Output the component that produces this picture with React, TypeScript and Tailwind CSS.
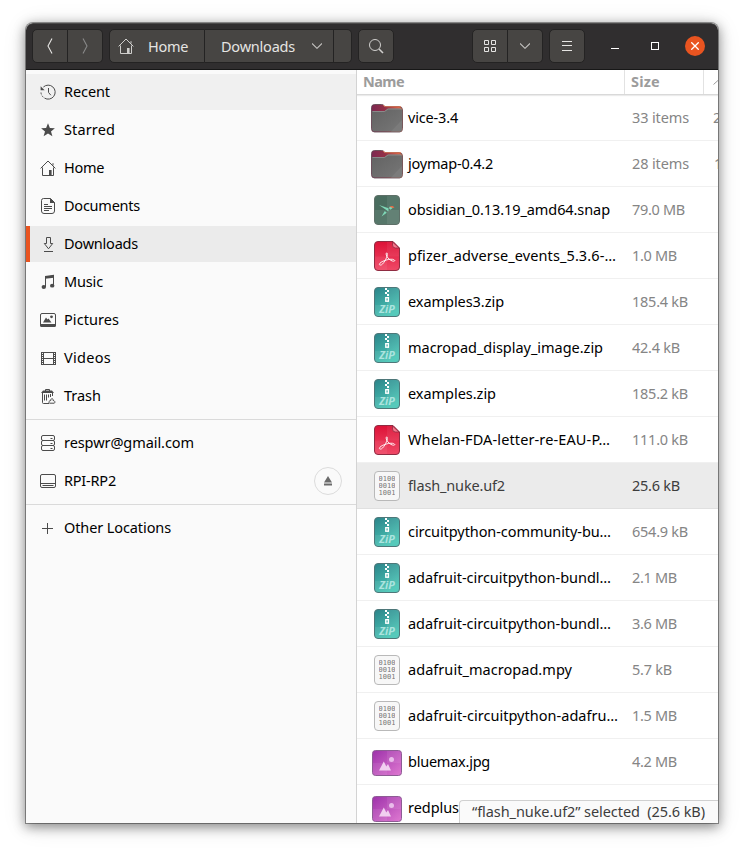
import { useLayoutEffect, useRef, useState, type ReactNode } from "react";

/** Single line of text whose tracking is adjusted so that it spans `width` pixels. */
function Label({ text, width, className = "" }: { text: string; width: number; className?: string }) {
  const ref = useRef<HTMLSpanElement>(null);
  const [tracking, setTracking] = useState(0);
  useLayoutEffect(() => {
    if (ref.current) {
      const natural = ref.current.getBoundingClientRect().width;
      setTracking((width - natural) / text.length);
    }
  }, [text, width]);
  return (
    <span ref={ref} className={`whitespace-pre leading-5 ${className}`} style={{ letterSpacing: tracking }}>
      {text}
    </span>
  );
}

function Glyph({ children, className = "" }: { children: ReactNode; className?: string }) {
  return (
    <svg width="16" height="16" viewBox="0 0 16 16" fill="none" stroke="currentColor" className={`shrink-0 ${className}`}>
      {children}
    </svg>
  );
}

const HomeGlyph = ({ className }: { className?: string }) => (
  <Glyph className={className}>
    <path d="M.6 8.4 8 1l7.4 7.4M2.5 7.5v8h11v-8M13 3.2v2.3" />
    <path d="M9 10h2.6v5.5H9z" fill="currentColor" stroke="none" />
  </Glyph>
);

const glyphs = {
  recent: (
    <Glyph>
      <path d="M3.400 3A7 7 0 1 1 4.500 14.100M8.500 4v4.400l2.300 2.800" />
      <path d="M.6 2.200v4h4z" fill="currentColor" stroke="none" />
      <path d="M1 8.500a7 7 0 0 0 3.500 5.600" strokeDasharray="2 1.400" />
    </Glyph>
  ),
  star: (
    <Glyph>
      <path d="m8 1.200 1.900 4.700 5 .3-3.900 3.200 1.400 4.900L8 11.600l-4.400 2.700L5 9.400 1.100 6.200l5-.3z" fill="currentColor" stroke="none" />
    </Glyph>
  ),
  home: <HomeGlyph />,
  documents: (
    <Glyph>
      <path d="M3.500.5H10.500l4 4V13a2.500 2.500 0 0 1-2.500 2.500H4A2.500 2.500 0 0 1 1.500 13V2.500a2 2 0 0 1 2-2zM4 6.500h4M4 8.500h8M4 10.500h8M4 12.500h5" />
      <path d="M10 0v5h5z" fill="currentColor" stroke="none" />
    </Glyph>
  ),
  downloads: (
    <Glyph>
      <path d="M6.500 1.500h4v6h2.200L8.500 12.800 4.300 7.500h2.200zM4 15.500h9" />
    </Glyph>
  ),
  music: (
    <Glyph>
      <path d="M5.500 13V3l8-1v9.500" />
      <path d="M5 1.900 14 .8v3L5 4.800z" fill="currentColor" stroke="none" />
      <ellipse cx="3.800" cy="13" rx="2.200" ry="1.900" fill="currentColor" stroke="none" />
      <ellipse cx="12.200" cy="11.700" rx="2.200" ry="1.900" fill="currentColor" stroke="none" />
    </Glyph>
  ),
  pictures: (
    <Glyph>
      <rect x=".5" y="1.500" width="15" height="12.500" rx="1.500" />
      <path d="M0 12h16v1.500a1.500 1.500 0 0 1-1.500 1.500h-13A1.500 1.500 0 0 1 0 13.500zM3 10.500 6 5.500l1.500 2L8.500 6.500l3 4z" fill="currentColor" stroke="none" />
      <circle cx="11.500" cy="4.800" r="1.400" fill="currentColor" stroke="none" />
    </Glyph>
  ),
  videos: (
    <Glyph>
      <path d="M3.500 2v13M13.500 2v13M1 2.500h15M1 14.500h15M3 8.500h11M1.500 2v13M15.500 2v13" />
      <path d="M2.500 4v10M14.500 4v10" strokeDasharray="1 1" />
    </Glyph>
  ),
  trash: (
    <Glyph>
      <path d="M5.500 3V1.500h4V3M2.500 5v9.500q0 1 1 1H9M4.500 6.500v6M6.500 6.500v6M8.500 6.500v3M10.500 6v3" />
      <path d="M1 5 3 2.500h9L14 5zM12 5h1v3h-1z" fill="currentColor" stroke="none" />
      <path d="M9.500 15.200c-1.400-1-.2-2.700 1.300-2.700-.4-1.300.7-2 1.700-1.700.9.500.6 1.200.6 1.700 1.300-.2 2.600 1.700 1.200 2.700z" />
    </Glyph>
  ),
  server: (
    <Glyph>
      <rect x="1.500" y=".5" width="13" height="5" rx="1.500" />
      <rect x="1.500" y="5.500" width="13" height="5" rx="1.500" />
      <rect x="1.500" y="10.500" width="13" height="5" rx="1.500" />
      <path d="M10.500 3.500h2M10.500 8.500h2M10.500 13.500h2" />
    </Glyph>
  ),
  drive: (
    <Glyph>
      <rect x=".5" y="1.500" width="15" height="13" rx="1.500" />
      <path d="M1 10.500h14M2.500 12.500h11" />
    </Glyph>
  ),
  plus: (
    <Glyph>
      <path d="M7.500 3v11M2 8.500h11" />
    </Glyph>
  ),
};

type Place = { icon: keyof typeof glyphs; text: string; width: number; tone?: string; eject?: boolean };

const places: Place[][] = [
  [
    { icon: "recent", text: "Recent", width: 46, tone: "bg-[#f0f0f0]" },
    { icon: "star", text: "Starred", width: 51 },
    { icon: "home", text: "Home", width: 40 },
    { icon: "documents", text: "Documents", width: 76 },
    { icon: "downloads", text: "Downloads", width: 74, tone: "bg-[#ebebeb] border-l-4 border-[#e95420]" },
    { icon: "music", text: "Music", width: 39 },
    { icon: "pictures", text: "Pictures", width: 55 },
    { icon: "videos", text: "Videos", width: 47 },
    { icon: "trash", text: "Trash", width: 37 },
  ],
  [
    { icon: "server", text: "respwr@gmail.com", width: 130 },
    { icon: "drive", text: "RPI-RP2", width: 52, eject: true },
  ],
  [{ icon: "plus", text: "Other Locations", width: 107 }],
];

function PlaceRow({ place }: { place: Place }) {
  const selected = place.text === "Downloads";
  return (
    <div className={`flex h-9 items-center gap-2 pr-[14px] ${selected ? "pl-[10px]" : "pl-[14px]"} ${place.tone ?? ""}`}>
      <span className="text-[#4b4b4b]">{glyphs[place.icon]}</span>
      <Label text={place.text} width={place.width} className="mb-[2px]" />
      {place.eject && (
        <span className="ml-auto flex size-7 items-center justify-center rounded-full border border-[#dcdcdc] text-[#6b6b6b]">
          <svg width="8" height="10" viewBox="0 0 8 10" fill="currentColor">
            <path d="m4 0 4 6.500H0zM0 7.500h8v2H0z" />
          </svg>
        </span>
      )}
    </div>
  );
}

function Folder() {
  return (
    <svg width="34" height="32" viewBox="0 0 34 32">
      <defs>
        <linearGradient id="tab" x1="0" x2="1">
          <stop offset="0" stopColor="#7d2851" />
          <stop offset=".45" stopColor="#943147" />
          <stop offset="1" stopColor="#ed7148" />
        </linearGradient>
        <linearGradient id="front" x1="0" y1="0" x2="1" y2="1">
          <stop offset="0" stopColor="#626262" />
          <stop offset="1" stopColor="#777" />
        </linearGradient>
      </defs>
      <path d="M1.500 5.500q0-3 3-3h7q1.500 0 2.500 1l1 1h14q3.500 0 3.500 3.500v18.500q0 3.500-3 3.500h-25q-3 0-3-3.500z" fill="url(#tab)" stroke="#59404a" strokeOpacity=".8" />
      <path d="M2 9h12.500l3.300-2.500H30q2 0 2 2v18.200q0 2.800-3 2.800H5q-3 0-3-2.800z" fill="url(#front)" />
      <path d="M32 18v8.700q0 2.800-3 2.800h-8z" fill="#7b7b7b" />
      <path d="M2.500 9.500h12l3.500-2.500h13.500" fill="none" stroke="#999" strokeWidth=".7" />
      <path d="M13 3q1 1.300 2 1.600h16" fill="none" stroke="#ef7a50" strokeWidth=".7" />
    </svg>
  );
}

function Sheet({ children, fill, edge }: { children: ReactNode; fill: string; edge: string }) {
  return (
    <svg width="26" height="32" viewBox="0 0 26 32">
      <defs>
        <linearGradient id="teal" x1="0" y1="0" x2=".5" y2="1">
          <stop offset="0" stopColor="#2b8389" />
          <stop offset="1" stopColor="#4ac6b6" />
        </linearGradient>
      </defs>
      <rect x=".5" y="1.500" width="25" height="29" rx="3.500" fill={fill} stroke={edge} />
      {children}
    </svg>
  );
}

const Zip = () => (
  <Sheet fill="url(#teal)" edge="#4e7779">
    <path d="M1 19h24v8.500q0 2.500-2.500 2.500h-19Q1 30 1 27.500zM13 2h12v17H13z" fill="#fff" fillOpacity=".07" />
    <path d="M11 2h2v2h-2zM13 4h2v2h-2zM11 6h2v2h-2zM13 8h2v2h-2z" fill="#fff" />
    <rect x="11.800" y="11.700" width="2.600" height="3.500" fill="none" stroke="#fff" strokeWidth="1.400" />
    <text x="5.300" y="26.900" textLength="15.500" lengthAdjust="spacingAndGlyphs" fill="#ace4df" className="font-['Open_Sans',sans-serif] text-[10px] font-bold italic">
      ZiP
    </text>
  </Sheet>
);

const Pdf = () => (
  <svg width="26" height="32" viewBox="0 0 26 32">
    <defs>
      <linearGradient id="pdf" x1="0" y1="0" x2="0" y2="1">
        <stop offset="0" stopColor="#dd1237" />
        <stop offset="1" stopColor="#f04967" />
      </linearGradient>
    </defs>
    <path d="M4 1.500h15l6.500 6.500v19q0 3.500-3.500 3.500H4q-3.500 0-3.500-3.500V5q0-3.500 3.500-3.500z" fill="url(#pdf)" stroke="#8f2c42" />
    <path d="M1 16.500h12V30H4q-3 0-3-3zM13 2h6l6 6v8.500H13z" fill="#fff" fillOpacity=".06" />
    <path d="M18.500 2v3q0 3 3 3H25z" fill="#f8798e" stroke="#8f2c42" strokeWidth=".8" />
    <path d="M5.300 24.500c0-1.500 3-3.200 5.500-4 2.200-.8 5.600-1.500 7.800-1.200 2.100.3 3 1.800 1.200 1.900-2 .2-4.600-1.900-5.800-3.200-1.600-1.800-2.500-4.400-1.400-5.100 1-.3 1 2.500-.1 4.800-1.400 3.400-5 9.300-7.200 6.800z" fill="none" stroke="#fff" strokeWidth=".9" />
  </svg>
);

const Snap = () => (
  <Sheet fill="#4a6d5f" edge="#5e7068">
    <path d="M13 2h9q3 0 3 3v11H13zM1 16h12v14H4q-3 0-3-3z" fill="#fff" fillOpacity=".07" />
    <path d="M13 16h12v11q0 3-3 3h-9z" fill="#fff" fillOpacity=".14" />
    <path d="m5 11 9.500 3.200v3.300zM15 14.200l.5-1.500 4 .5-3 2.500zM10.800 17l2 1.800L7.500 22.500z" fill="#7fd8b7" />
    <path d="M15.500 12.800q1-.8 3-.7l2 1.200-1.500.8z" fill="#ed6a43" />
  </Sheet>
);

const Binary = () => (
  <div className="flex h-[30px] w-[26px] flex-col items-center rounded-[4px] border border-[#b9b9b9] bg-[#f7f7f7] pt-[4px] font-['DejaVu_Sans_Mono',monospace] text-[7px] leading-[7px] text-[#777]">
    {["0100", "0010", "1001"].map((digits) => (
      <span key={digits} className="block h-[7px] overflow-hidden">
        {digits}
      </span>
    ))}
  </div>
);

const Image = () => (
  <svg width="30" height="32" viewBox="0 0 30 32">
    <defs>
      <linearGradient id="violet" x1="0" y1="0" x2="1" y2="1">
        <stop offset="0" stopColor="#9d32aa" />
        <stop offset="1" stopColor="#df79d1" />
      </linearGradient>
    </defs>
    <rect x=".5" y="4.500" width="29" height="25" rx="3" fill="url(#violet)" stroke="#8d5c94" />
    <path d="M15 5h12q2 0 2 2v10H15zM1 17h14v12H3q-2 0-2-2z" fill="#fff" fillOpacity=".07" />
    <path d="m7 24.500 4.800-9 2.500 5L16 18l3 6.500z" fill="#f1cff0" />
    <circle cx="19.500" cy="13.500" r="2.500" fill="#e9bcea" />
  </svg>
);

const icons = { folder: Folder, zip: Zip, pdf: Pdf, snap: Snap, binary: Binary, image: Image };

type Entry = { icon: keyof typeof icons; name: string; width: number; size: string; sizeWidth: number; date?: string };

const files: Entry[] = [
  { icon: "folder", name: "vice-3.4", width: 50, size: "33 items", sizeWidth: 57, date: "2" },
  { icon: "folder", name: "joymap-0.4.2", width: 85, size: "28 items", sizeWidth: 57, date: "1" },
  { icon: "snap", name: "obsidian_0.13.19_amd64.snap", width: 202, size: "79.0 MB", sizeWidth: 53 },
  { icon: "pdf", name: "pfizer_adverse_events_5.3.6-…", width: 208, size: "1.0 MB", sizeWidth: 45 },
  { icon: "zip", name: "examples3.zip", width: 96, size: "185.4 kB", sizeWidth: 56 },
  { icon: "zip", name: "macropad_display_image.zip", width: 195, size: "42.4 kB", sizeWidth: 48 },
  { icon: "zip", name: "examples.zip", width: 88, size: "185.2 kB", sizeWidth: 56 },
  { icon: "pdf", name: "Whelan-FDA-letter-re-EAU-P…", width: 202, size: "111.0 kB", sizeWidth: 56 },
  { icon: "binary", name: "flash_nuke.uf2", width: 97, size: "25.6 kB", sizeWidth: 48 },
  { icon: "zip", name: "circuitpython-community-bu…", width: 203, size: "654.9 kB", sizeWidth: 56 },
  { icon: "zip", name: "adafruit-circuitpython-bundl…", width: 203, size: "2.1 MB", sizeWidth: 45 },
  { icon: "zip", name: "adafruit-circuitpython-bundl…", width: 203, size: "3.6 MB", sizeWidth: 45 },
  { icon: "binary", name: "adafruit_macropad.mpy", width: 164, size: "5.7 kB", sizeWidth: 40 },
  { icon: "binary", name: "adafruit-circuitpython-adafru…", width: 210, size: "1.5 MB", sizeWidth: 45 },
  { icon: "image", name: "bluemax.jpg", width: 82, size: "4.2 MB", sizeWidth: 45 },
  { icon: "image", name: "redplus", width: 51, size: "", sizeWidth: 0 },
];

function FileRow({ file }: { file: Entry }) {
  const Icon = icons[file.icon];
  const selected = file.name === "flash_nuke.uf2";
  return (
    <div className={`flex h-[46px] shrink-0 items-center border-b ${selected ? "border-[#e0e0e0] bg-[#ebebeb] text-[#3d3d3d]" : "border-[#f0f0f0]"}`}>
      <div className="flex w-[51px] shrink-0 justify-center pl-[9px]">
        <Icon />
      </div>
      <div className="w-[224px] shrink-0">
        <Label text={file.name} width={file.width} />
      </div>
      <div className={`w-[81px] shrink-0 ${selected ? "" : "text-[#858585]"}`}>
        {file.size && <Label text={file.size} width={file.sizeWidth} />}
      </div>
      <span className={`shrink-0 text-[#858585] ${file.date === "1" ? "pl-px" : ""}`}>{file.date}</span>
    </div>
  );
}

const button = "flex h-[34px] items-center justify-center bg-[#474543] border border-[#242323]";

const Chevron = () => (
  <svg width="10" height="6" viewBox="0 0 10 6" fill="none" stroke="currentColor" strokeWidth="1.100" className="text-[#c4c3c1]">
    <path d="m0 .5 5 4.800 5-4.800" />
  </svg>
);

function HeaderBar() {
  return (
    <header className="flex h-[47px] shrink-0 items-center rounded-t-[7px] border-t border-b border-t-[#4b4a4a] border-b-[#171717] bg-[#302e2f] pb-px pl-[6px] text-[#e5e4e2]">
      <div className="flex">
        <div className={`${button} w-9 rounded-l-[5px]`}>
          <svg width="6" height="16" viewBox="0 0 6 16" fill="none" stroke="currentColor" strokeWidth="1.100">
            <path d="M5 .5 1 8l4 7.500" />
          </svg>
        </div>
        <div className={`${button} w-[35px] rounded-r-[5px] border-l-0 bg-[#393737] text-[#888]`}>
          <svg width="6" height="16" viewBox="0 0 6 16" fill="none" stroke="currentColor" strokeWidth="1.100">
            <path d="m1 .5 4 7.500-4 7.500" />
          </svg>
        </div>
      </div>
      <div className="ml-[6px] flex">
        <div className={`${button} w-24 justify-start gap-[14px] rounded-l-[5px] border-[#181818] pl-2`}>
          <HomeGlyph className="text-[#cfcecc]" />
          <Label text="Home" width={40} className="mb-px" />
        </div>
        <div className={`${button} w-[129px] justify-start gap-[17px] border-l-0 border-[#181818] pl-4`}>
          <Label text="Downloads" width={74} className="mb-px" />
          <Chevron />
        </div>
        <div className={`${button} w-[18px] rounded-r-[5px] border-l-0 border-[#181818] bg-[#403e3c]`} />
      </div>
      <div className={`${button} ml-[6px] w-9 rounded-[5px]`}>
        <Glyph className="text-[#d0cfcd]">
          <circle cx="7" cy="7" r="5.500" />
          <path d="m11 11 4 4" strokeWidth="1.600" />
        </Glyph>
      </div>
      <div className="ml-[78px] flex">
        <div className={`${button} w-9 rounded-l-[5px]`}>
          <Glyph>
            <path d="M2.500 2.500h4v4h-4zM9.500 2.500h4v4h-4zM2.500 9.500h4v4h-4zM9.500 9.500h4v4h-4z" />
          </Glyph>
        </div>
        <div className={`${button} w-[35px] rounded-r-[5px] border-l-0`}>
          <Chevron />
        </div>
      </div>
      <div className={`${button} ml-[6px] w-9 rounded-[5px]`}>
        <Glyph>
          <path d="M3 3.500h10M3 7.500h10M3 12.500h10" />
        </Glyph>
      </div>
      <div className="ml-[26px] mt-[5px] h-px w-2 bg-white" />
      <div className="ml-8 size-2 border border-white" />
      <div className="ml-[26px] flex size-5 items-center justify-center rounded-full bg-[#e95420]">
        <svg width="8" height="8" viewBox="0 0 8 8" stroke="#fff" strokeWidth="1.300">
          <path d="m.3.300 7.400 7.400M7.700.3.300 7.700" />
        </svg>
      </div>
    </header>
  );
}

export default function App() {
  return (
    <div className="flex h-[852px] w-[744px] bg-white pl-[26px] pt-[23px] font-['Noto_Sans',sans-serif] text-[14.5px] text-black">
      <div className="h-[800px] w-[692px] rounded-t-[7px] shadow-[0_0_0_1px_rgba(0,0,0,0.36),0_3px_12px_1px_rgba(0,0,0,0.42),0_3px_24px_rgba(0,0,0,0.12)]">
        <div className="flex h-full flex-col overflow-hidden rounded-t-[7px]">
          <HeaderBar />
          <div className="flex min-h-0 grow">
            <nav className="w-[331px] shrink-0 border-r border-[#d3d3d3] bg-[#fafafa] pt-1">
              {places.map((group, i) => (
                <div key={i} className={`flex flex-col gap-[2px] ${i > 0 ? "mt-[5px] border-t border-[#dadada] pt-[5px]" : ""}`}>
                  {group.map((place) => (
                    <PlaceRow key={place.text} place={place} />
                  ))}
                </div>
              ))}
            </nav>
            <main className="relative flex min-w-0 grow flex-col overflow-hidden bg-white">
              <div className="flex h-[25px] shrink-0 border-b border-[#d9d9d9] font-bold text-[#9c9c9c] shadow-[0_1px_1px_rgba(0,0,0,0.08)]">
                <div className="w-[268px] shrink-0 border-r border-[#e2e2e2] pl-[6px] pt-px">
                  <Label text="Name" width={41} />
                </div>
                <div className="w-[79px] shrink-0 border-r border-[#e2e2e2] pl-[6px] pt-px">
                  <Label text="Size" width={29} />
                </div>
                <svg width="12" height="6" viewBox="0 0 12 6" fill="none" stroke="currentColor" className="ml-[9px] mt-[9px] shrink-0">
                  <path d="m.5 5.500 5.500-5 5.500 5" />
                </svg>
              </div>
              {files.map((file, i) => (
                <FileRow key={i} file={file} />
              ))}
              <div className="absolute right-0 bottom-0 flex h-[23px] w-[259px] rounded-tl-[4px] border-t border-l border-[#d0d0d0] bg-[#fafafa] pl-3 text-[#3d3d3d]">
                <Label text="“flash_nuke.uf2” selected  (25.6 kB)" width={233} />
              </div>
            </main>
          </div>
        </div>
      </div>
    </div>
  );
}
